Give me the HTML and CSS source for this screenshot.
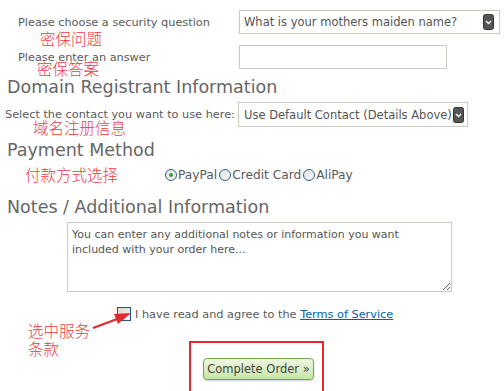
FILE: index.html
```html
<!DOCTYPE html>
<html>
<head>
  <title>Checkout</title>
  <link rel="stylesheet" href="styles.css">
</head>
<body>
  <div class="page">
    <div class="qa">
      <label class="qa-label">Please choose a security question</label>
      <div class="select select-question">
        <span>What is your mothers maiden name?</span>
        <svg class="select-arrow" width="11" height="16" viewBox="0 0 11 16">
          <rect x="0.5" y="0.5" width="10" height="15" rx="2" fill="#555" stroke="#333"/>
          <path d="M3 7 L5.5 9.5 L8 7" fill="none" stroke="#fff" stroke-width="1.3"/>
        </svg>
      </div>
      <label class="qa-label">Please enter an answer</label>
      <input class="answer" type="text">
    </div>

    <h2 class="section-title title-domain">Domain Registrant Information</h2>
    <div class="contact-row">
      <label class="contact-label">Select the contact you want to use here:</label>
      <div class="select select-contact">
        <span>Use Default Contact (Details Above)</span>
        <svg class="select-arrow" width="11" height="16" viewBox="0 0 11 16">
          <rect x="0.5" y="0.5" width="10" height="15" rx="2" fill="#555" stroke="#333"/>
          <path d="M3 7 L5.5 9.5 L8 7" fill="none" stroke="#fff" stroke-width="1.3"/>
        </svg>
      </div>
    </div>

    <h2 class="section-title title-payment">Payment Method</h2>
    <div class="payment-row">
      <label class="radio"><span class="radio-dot checked"></span>PayPal</label>
      <label class="radio"><span class="radio-dot"></span>Credit Card</label>
      <label class="radio"><span class="radio-dot"></span>AliPay</label>
    </div>

    <h2 class="section-title title-notes">Notes / Additional Information</h2>
    <textarea class="notes">You can enter any additional notes or information you want included with your order here...</textarea>

    <div class="agree-row">
      <span class="checkbox"></span>
      <span>I have read and agree to the <a href="#" class="tos">Terms of Service</a></span>
    </div>

    <div class="submit-row">
      <div class="highlight">
        <button class="complete-btn">Complete Order &raquo;</button>
      </div>
    </div>

    <!-- annotations drawn over the form -->
    <span class="note note-q">密保问题</span>
    <span class="note note-a">密保答案</span>
    <span class="note note-domain">域名注册信息</span>
    <span class="note note-pay">付款方式选择</span>
    <span class="note note-tos">选中服务<br>条款</span>
    <svg class="note-arrow" width="50" height="30" viewBox="0 0 50 30">
      <line x1="3" y1="23" x2="27" y2="14" stroke="#e8262e" stroke-width="2"/>
      <polygon points="41,8 28,19 24,9" fill="#e8262e"/>
    </svg>
  </div>
</body>
</html>
```

FILE: styles.css
```css
body {
  margin: 0;
  padding: 0;
  background-color: white;
  font-family: "DejaVu Sans", Verdana, sans-serif;
  font-size: 11.3px;
  color: #5a5a5a;
}

.page {
  position: relative;
  width: 504px;
  height: 391px;
  overflow: hidden;
}

.qa {
  display: grid;
  grid-template-columns: 239px 208px;
  row-gap: 11px;
  align-items: center;
  padding-top: 10px;
}

.qa-label {
  padding-left: 18px;
}

.select {
  display: flex;
  align-items: center;
  justify-content: space-between;
  box-sizing: border-box;
  border: 1px solid #c9c9bd;
  background-color: white;
  padding: 0 5px 0 4px;
  font-family: "DejaVu Sans", Verdana, sans-serif;
  color: #555;
}

.select-question {
  width: 261px;
  height: 24px;
  font-size: 11.5px;
}

.answer {
  box-sizing: border-box;
  width: 208px;
  height: 24px;
  border: 1px solid #c9c9bd;
  margin: 0;
  outline: none;
}

.section-title {
  margin: 0;
  padding-left: 7px;
  font-size: 17.5px;
  font-weight: normal;
  color: #666;
  line-height: 22px;
}

.title-domain {
  margin-top: 7px;
}

.contact-row {
  display: flex;
  align-items: center;
  margin-top: 4px;
}

.contact-label {
  width: 233px;
  padding-left: 5px;
}

.select-contact {
  width: 230px;
  height: 25px;
  padding-left: 5px;
  padding-right: 3px;
  font-size: 11.5px;
}

.title-payment {
  margin-top: 12px;
}

.payment-row {
  display: flex;
  gap: 2px;
  padding-left: 165px;
  margin-top: 7px;
  font-size: 12.2px;
}

.radio {
  display: flex;
  align-items: center;
}

.radio-dot {
  box-sizing: border-box;
  width: 12px;
  height: 12px;
  border: 1px solid #2e5f8e;
  border-radius: 50%;
  background: linear-gradient(135deg, #e0e0dc, #fafafa);
  position: relative;
  margin-right: 1px;
}

.radio-dot.checked::after {
  content: "";
  position: absolute;
  left: 3px;
  top: 3px;
  width: 4px;
  height: 4px;
  border-radius: 50%;
  background-color: #2fa336;
}

.title-notes {
  margin-top: 14px;
}

.notes {
  display: block;
  box-sizing: border-box;
  width: 385px;
  height: 70px;
  margin: 4px 0 0 67px;
  padding: 4px 4px;
  border: 1px solid #c9c9bd;
  font-family: "DejaVu Sans", Verdana, sans-serif;
  font-size: 11px;
  line-height: 15px;
  color: #555;
  outline: none;
}

.agree-row {
  display: flex;
  align-items: center;
  gap: 4px;
  padding-left: 117px;
  margin-top: 15px;
}

.checkbox {
  box-sizing: border-box;
  width: 14px;
  height: 14px;
  border: 1px solid #1d5687;
  background: linear-gradient(135deg, #d8d8d4, #f7f7f5);
}

.tos {
  color: #0063a8;
}

.submit-row {
  padding-left: 189px;
  margin-top: 20px;
}

.highlight {
  box-sizing: border-box;
  width: 135px;
  height: 52px;
  border: 2px solid #e8262e;
  padding-top: 15px;
  padding-left: 12px;
}

.complete-btn {
  box-sizing: border-box;
  width: 111px;
  height: 22px;
  border: 1px solid #72a84c;
  border-radius: 4px;
  background: linear-gradient(#eef8e2, #c6e5a6);
  box-shadow: 0 1px 2px rgba(0, 0, 0, 0.2);
  font-family: "DejaVu Sans", Verdana, sans-serif;
  font-size: 11.5px;
  color: #444;
  padding: 0;
}

.note {
  position: absolute;
  font-family: "Noto Sans CJK SC", sans-serif;
  font-size: 15.5px;
  font-weight: 300;
  line-height: 17px;
  color: #ec3b41;
}

.note-q { left: 40px; top: 30px; }
.note-a { left: 37px; top: 60px; }
.note-domain { left: 33px; top: 119px; }
.note-pay { left: 25px; top: 166px; }
.note-tos { left: 28px; top: 321px; line-height: 18px; }

.note-arrow {
  position: absolute;
  left: 90px;
  top: 305px;
}
```
